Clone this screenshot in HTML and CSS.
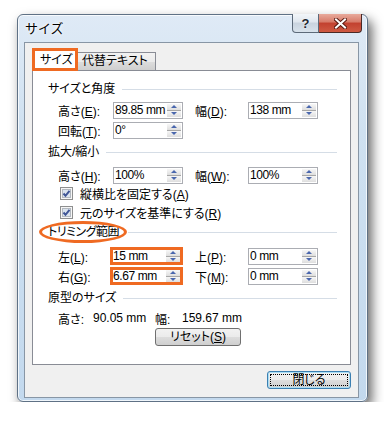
FILE: index.html
```html
<!DOCTYPE html>
<html lang="ja">
<head>
    <meta charset="UTF-8">
    <title>サイズ</title>
    <link rel="stylesheet" href="styles.css">
</head>
<body>

<div class="window">
    <div class="titlebar">
        <span class="title">サイズ</span>
        <div class="caption-btns">
            <span class="btn-help">?</span>
            <span class="btn-close">
                <svg width="13" height="11" viewBox="0 0 13 11">
                    <path d="M2 1.5 L11 9.5 M11 1.5 L2 9.5" stroke="#5a1a12" stroke-width="4" stroke-linecap="square"/>
                    <path d="M2 1.5 L11 9.5 M11 1.5 L2 9.5" stroke="#fff" stroke-width="2" stroke-linecap="square"/>
                </svg>
            </span>
        </div>
    </div>

    <div class="client">
        <div class="tabs">
            <div class="tab active">サイズ</div>
            <div class="tab">代替テキスト</div>
        </div>

        <div class="panel">
            <div class="group-title"><span>サイズと角度</span></div>
            <div class="row first">
                <span class="lbl">高さ(<u>E</u>):</span>
                <div class="spin"><span class="val">89.85 mm</span><span class="arrows"><i class="up"></i><i class="down"></i></span></div>
                <span class="lbl lbl-r">幅(<u>D</u>):</span>
                <div class="spin"><span class="val">138 mm</span><span class="arrows"><i class="up"></i><i class="down"></i></span></div>
            </div>
            <div class="row">
                <span class="lbl">回転(<u>T</u>):</span>
                <div class="spin"><span class="val">0°</span><span class="arrows"><i class="up"></i><i class="down"></i></span></div>
            </div>

            <div class="group-title g2"><span>拡大/縮小</span></div>
            <div class="row r3">
                <span class="lbl">高さ(<u>H</u>):</span>
                <div class="spin"><span class="val">100%</span><span class="arrows"><i class="up"></i><i class="down"></i></span></div>
                <span class="lbl lbl-r">幅(<u>W</u>):</span>
                <div class="spin"><span class="val">100%</span><span class="arrows"><i class="up"></i><i class="down"></i></span></div>
            </div>
            <div class="check first-check">
                <svg width="13" height="13" viewBox="0 0 13 13"><rect x="0.5" y="0.5" width="12" height="12" fill="#f6f6f6" stroke="#8e8f8f"/><rect x="2.5" y="2.5" width="8" height="8" fill="#dbe4ee" stroke="#b3b9c0"/><path d="M3.5 6.5 L5.5 8.8 L9.5 3.8" fill="none" stroke="#3f5596" stroke-width="2"/></svg>
                <span>縦横比を固定する(<u>A</u>)</span>
            </div>
            <div class="check">
                <svg width="13" height="13" viewBox="0 0 13 13"><rect x="0.5" y="0.5" width="12" height="12" fill="#f6f6f6" stroke="#8e8f8f"/><rect x="2.5" y="2.5" width="8" height="8" fill="#dbe4ee" stroke="#b3b9c0"/><path d="M3.5 6.5 L5.5 8.8 L9.5 3.8" fill="none" stroke="#3f5596" stroke-width="2"/></svg>
                <span>元のサイズを基準にする(<u>R</u>)</span>
            </div>

            <div class="group-title g3"><span class="ringed">トリミング範囲<i class="ring"></i></span></div>
            <div class="row r4">
                <span class="lbl">左(<u>L</u>):</span>
                <div class="spin mark"><span class="val">15 mm</span><span class="arrows"><i class="up"></i><i class="down"></i></span></div>
                <span class="lbl lbl-r">上(<u>P</u>):</span>
                <div class="spin"><span class="val">0 mm</span><span class="arrows"><i class="up"></i><i class="down"></i></span></div>
            </div>
            <div class="row">
                <span class="lbl">右(<u>G</u>):</span>
                <div class="spin mark"><span class="val">6.67 mm</span><span class="arrows"><i class="up"></i><i class="down"></i></span></div>
                <span class="lbl lbl-r">下(<u>M</u>):</span>
                <div class="spin"><span class="val">0 mm</span><span class="arrows"><i class="up"></i><i class="down"></i></span></div>
            </div>

            <div class="group-title g4"><span>原型のサイズ</span></div>
            <div class="orig">
                <span class="o-lbl">高さ:</span>
                <span class="o-val">90.05 mm</span>
                <span class="o-lbl2">幅:</span>
                <span>159.67 mm</span>
            </div>
            <div class="reset-row">
                <button class="btn reset">リセット(<u>S</u>)</button>
            </div>
        </div>

        <div class="footer">
            <button class="btn close">閉じる</button>
        </div>
    </div>
</div>

</body>
</html>
```

FILE: styles.css
```css
body {
    margin: 0;
    background: #fff;
    font-family: "Liberation Sans", "Noto Sans CJK JP", sans-serif;
    font-size: 12px;
    font-feature-settings: "palt";
    color: #000;
}

/* window frame */
.window {
    margin: 14px 0 0 17px;
    width: 351px;
    height: 388px;
    box-sizing: border-box;
    border: 1px solid #5f7185;
    border-radius: 6px;
    background: linear-gradient(#dfeaf6, #cfe1f1 30%, #c3d9ee);
    box-shadow: inset 0 0 0 1px rgba(255,255,255,.75), 4px 6px 12px rgba(0,0,0,.6);
}
.titlebar {
    display: flex;
    justify-content: space-between;
    align-items: flex-start;
    height: 27px;
}
.title {
    margin: 6px 0 0 7px;
    font-size: 13px;
    line-height: 16px;
    font-feature-settings: normal;
    text-shadow: 0 0 4px #fff, 0 0 2px #fff;
}
.caption-btns {
    display: flex;
    margin: -1px 5px 0 0;
}
.btn-help, .btn-close {
    display: flex;
    align-items: center;
    justify-content: center;
    height: 19px;
    box-sizing: border-box;
    border: 1px solid #5d6a79;
    border-top: 0;
}
.btn-help {
    width: 27px;
    border-radius: 0 0 0 4px;
    background: linear-gradient(#f3f6f9, #dfe6ee 45%, #c9d3de 50%, #d8e2ec);
    font-weight: bold;
    font-size: 13px;
    color: #1d2531;
    text-shadow: 0 0 2px #fff;
}
.btn-close {
    width: 43px;
    border-left: 0;
    border-color: #4a2a26;
    border-radius: 0 0 4px 0;
    background: linear-gradient(#e8aa9c, #d77a68 45%, #c2412f 50%, #cf5a43);
}

/* client area */
.client {
    margin: 0 8px 0 6px;
    height: 356px;
    box-sizing: border-box;
    border: 1px solid #8896a5;
    background: #f0f0f0;
    padding: 5px 7px 0 7px;
}
.tabs {
    display: flex;
    align-items: flex-end;
    height: 22px;
}
.tab {
    height: 18px;
    box-sizing: border-box;
    border: 1px solid #898c95;
    border-bottom: 0;
    border-left: 0;
    padding: 0 7px 0 4px;
    line-height: 17px;
    background: linear-gradient(#f2f2f2, #ebebeb 50%, #dddddd 50%, #cfcfcf);
}
.tab.active {
    position: relative;
    z-index: 1;
    width: 46px;
    height: 23px;
    margin-bottom: -1px;
    border: 3px solid #ef6a22;
    padding: 0 0 0 5px;
    line-height: 18px;
    background: #fff;
}
.panel {
    height: 295px;
    box-sizing: border-box;
    border: 1px solid #898c95;
    background: #fff;
    padding: 10px 13px 0 15px;
}

.group-title {
    display: flex;
    align-items: center;
    height: 16px;
    line-height: 16px;
}
.group-title::after {
    content: "";
    flex: 1;
    height: 1px;
    margin-left: 7px;
    background: #d5dde6;
}
.g2 { margin-top: 4px; }
.g3 { margin-top: 2px; }
.g3::after { margin-left: 9px; }
.g4 { margin-top: 4px; }
.ringed {
    position: relative;
    letter-spacing: -0.5px;
}
.ring {
    position: absolute;
    left: -9px;
    right: -8px;
    top: -3px;
    bottom: -3px;
    border: 3px solid #ef6a22;
    border-radius: 50%;
}

.row {
    display: flex;
    align-items: center;
    height: 20px;
    padding-left: 10px;
}
.row.first { margin-top: 3px; }
.row.r3 { margin-top: 5px; }
.row.r4 { margin-top: 6px; }
.lbl {
    width: 55px;
    white-space: nowrap;
}
.lbl-r {
    width: 53px;
    margin-left: 12px;
}

.spin {
    display: flex;
    width: 70px;
    height: 17px;
    box-sizing: border-box;
    border: 1px solid #abadb3;
    background: #fff;
}
.spin.mark {
    width: 73px;
    height: 18px;
    margin-left: -3px;
    border: 3px solid #ef6a22;
}
.val {
    flex: 1;
    padding-left: 1px;
    line-height: 15px;
    letter-spacing: -0.4px;
    white-space: nowrap;
}
.mark .val {
    line-height: 12px;
    padding-left: 0;
}
.arrows {
    display: flex;
    flex-direction: column;
    width: 14px;
    margin: 1px;
}
.mark .arrows {
    margin: 0;
}
.arrows i {
    flex: 1;
    display: flex;
    align-items: center;
    justify-content: center;
    background: linear-gradient(#f7f7f7, #dedede);
}
.arrows i.down {
    border-top: 1px solid #a7a7a7;
}
.arrows i::before {
    content: "";
    border-left: 3px solid transparent;
    border-right: 3px solid transparent;
}
.arrows .up::before { border-bottom: 3px solid #4a67ad; }
.arrows .down::before { border-top: 3px solid #4a67ad; }

.check {
    display: flex;
    align-items: center;
    height: 19px;
    padding-left: 12px;
    white-space: nowrap;
}
.check.first-check { margin-top: -1px; }
.check svg { margin-right: 7px; }

.orig {
    display: flex;
    align-items: center;
    height: 16px;
    margin-top: 4px;
    padding-left: 10px;
    white-space: nowrap;
}
.o-lbl { width: 35px; }
.o-val { width: 62px; }
.o-lbl2 { width: 27px; }

.reset-row {
    margin-top: 2px;
    padding-left: 107px;
}
.btn {
    position: relative;
    display: block;
    height: 18px;
    padding: 0;
    box-sizing: border-box;
    border: 1px solid #707070;
    border-radius: 3px;
    background: linear-gradient(#f2f2f2, #ebebeb 50%, #dddddd 50%, #cfcfcf);
    font: inherit;
    line-height: 15px;
    color: #000;
}
.reset {
    width: 86px;
}

.footer {
    display: flex;
    justify-content: flex-end;
    margin-top: 6px;
}
.close {
    width: 84px;
    border-color: #3c7fb1;
    box-shadow: inset 0 0 0 1px #a9def5;
}
.close::after {
    content: "";
    position: absolute;
    left: 2px;
    top: 2px;
    right: 2px;
    bottom: 2px;
    border: 1px dotted #000;
}
```
